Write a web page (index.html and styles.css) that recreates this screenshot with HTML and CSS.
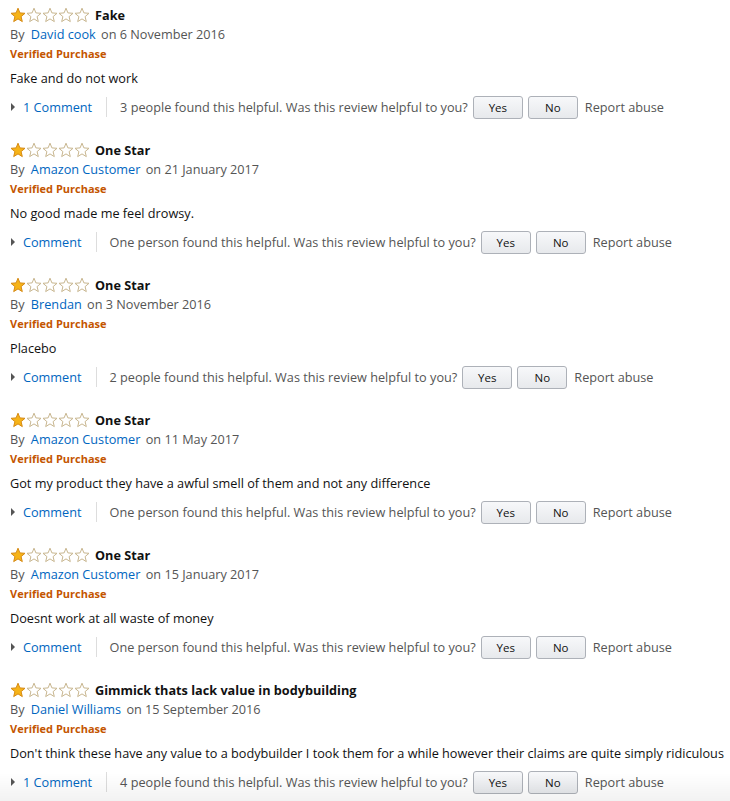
FILE: index.html
```html
<!DOCTYPE html>
<html>
<head>
<meta charset="utf-8">
<link rel="stylesheet" href="styles.css">
</head>
<body>
<svg width="0" height="0" class="defs">
  <defs>
    <path id="star" d="M8 1.2 L9.9 5.9 L15 6.3 L11.1 9.6 L12.3 14.6 L8 11.9 L3.7 14.6 L4.9 9.6 L1 6.3 L6.1 5.9 Z"/>
  </defs>
</svg>
<div class="reviews">

  <div class="review">
    <div class="title-row">
      <span class="stars"><svg viewBox="0 0 16 16" class="star full"><use href="#star"/></svg><svg viewBox="0 0 16 16" class="star"><use href="#star"/></svg><svg viewBox="0 0 16 16" class="star"><use href="#star"/></svg><svg viewBox="0 0 16 16" class="star"><use href="#star"/></svg><svg viewBox="0 0 16 16" class="star"><use href="#star"/></svg></span>
      <span class="title">Fake</span>
    </div>
    <div class="byline">By <a class="author">David cook</a> on 6 November 2016</div>
    <div class="verified">Verified Purchase</div>
    <div class="body">Fake and do not work</div>
    <div class="actions">
      <span class="tri"></span><a class="comment">1 Comment</a><span class="sep"></span>
      <span class="helpful">3 people found this helpful. Was this review helpful to you?</span>
      <button class="btn">Yes</button><button class="btn">No</button>
      <span class="report">Report abuse</span>
    </div>
  </div>

  <div class="review">
    <div class="title-row">
      <span class="stars"><svg viewBox="0 0 16 16" class="star full"><use href="#star"/></svg><svg viewBox="0 0 16 16" class="star"><use href="#star"/></svg><svg viewBox="0 0 16 16" class="star"><use href="#star"/></svg><svg viewBox="0 0 16 16" class="star"><use href="#star"/></svg><svg viewBox="0 0 16 16" class="star"><use href="#star"/></svg></span>
      <span class="title">One Star</span>
    </div>
    <div class="byline">By <a class="author">Amazon Customer</a> on 21 January 2017</div>
    <div class="verified">Verified Purchase</div>
    <div class="body">No good made me feel drowsy.</div>
    <div class="actions">
      <span class="tri"></span><a class="comment">Comment</a><span class="sep"></span>
      <span class="helpful">One person found this helpful. Was this review helpful to you?</span>
      <button class="btn">Yes</button><button class="btn">No</button>
      <span class="report">Report abuse</span>
    </div>
  </div>

  <div class="review">
    <div class="title-row">
      <span class="stars"><svg viewBox="0 0 16 16" class="star full"><use href="#star"/></svg><svg viewBox="0 0 16 16" class="star"><use href="#star"/></svg><svg viewBox="0 0 16 16" class="star"><use href="#star"/></svg><svg viewBox="0 0 16 16" class="star"><use href="#star"/></svg><svg viewBox="0 0 16 16" class="star"><use href="#star"/></svg></span>
      <span class="title">One Star</span>
    </div>
    <div class="byline">By <a class="author">Brendan</a> on 3 November 2016</div>
    <div class="verified">Verified Purchase</div>
    <div class="body">Placebo</div>
    <div class="actions">
      <span class="tri"></span><a class="comment">Comment</a><span class="sep"></span>
      <span class="helpful">2 people found this helpful. Was this review helpful to you?</span>
      <button class="btn">Yes</button><button class="btn">No</button>
      <span class="report">Report abuse</span>
    </div>
  </div>

  <div class="review">
    <div class="title-row">
      <span class="stars"><svg viewBox="0 0 16 16" class="star full"><use href="#star"/></svg><svg viewBox="0 0 16 16" class="star"><use href="#star"/></svg><svg viewBox="0 0 16 16" class="star"><use href="#star"/></svg><svg viewBox="0 0 16 16" class="star"><use href="#star"/></svg><svg viewBox="0 0 16 16" class="star"><use href="#star"/></svg></span>
      <span class="title">One Star</span>
    </div>
    <div class="byline">By <a class="author">Amazon Customer</a> on 11 May 2017</div>
    <div class="verified">Verified Purchase</div>
    <div class="body">Got my product they have a awful smell of them and not any difference</div>
    <div class="actions">
      <span class="tri"></span><a class="comment">Comment</a><span class="sep"></span>
      <span class="helpful">One person found this helpful. Was this review helpful to you?</span>
      <button class="btn">Yes</button><button class="btn">No</button>
      <span class="report">Report abuse</span>
    </div>
  </div>

  <div class="review">
    <div class="title-row">
      <span class="stars"><svg viewBox="0 0 16 16" class="star full"><use href="#star"/></svg><svg viewBox="0 0 16 16" class="star"><use href="#star"/></svg><svg viewBox="0 0 16 16" class="star"><use href="#star"/></svg><svg viewBox="0 0 16 16" class="star"><use href="#star"/></svg><svg viewBox="0 0 16 16" class="star"><use href="#star"/></svg></span>
      <span class="title">One Star</span>
    </div>
    <div class="byline">By <a class="author">Amazon Customer</a> on 15 January 2017</div>
    <div class="verified">Verified Purchase</div>
    <div class="body">Doesnt work at all waste of money</div>
    <div class="actions">
      <span class="tri"></span><a class="comment">Comment</a><span class="sep"></span>
      <span class="helpful">One person found this helpful. Was this review helpful to you?</span>
      <button class="btn">Yes</button><button class="btn">No</button>
      <span class="report">Report abuse</span>
    </div>
  </div>

  <div class="review">
    <div class="title-row">
      <span class="stars"><svg viewBox="0 0 16 16" class="star full"><use href="#star"/></svg><svg viewBox="0 0 16 16" class="star"><use href="#star"/></svg><svg viewBox="0 0 16 16" class="star"><use href="#star"/></svg><svg viewBox="0 0 16 16" class="star"><use href="#star"/></svg><svg viewBox="0 0 16 16" class="star"><use href="#star"/></svg></span>
      <span class="title">Gimmick thats lack value in bodybuilding</span>
    </div>
    <div class="byline">By <a class="author">Daniel Williams</a> on 15 September 2016</div>
    <div class="verified">Verified Purchase</div>
    <div class="body">Don't think these have any value to a bodybuilder I took them for a while however their claims are quite simply ridiculous</div>
    <div class="actions">
      <span class="tri"></span><a class="comment">1 Comment</a><span class="sep"></span>
      <span class="helpful">4 people found this helpful. Was this review helpful to you?</span>
      <button class="btn">Yes</button><button class="btn">No</button>
      <span class="report">Report abuse</span>
    </div>
  </div>

</div>
<div class="fade"></div>
</body>
</html>
```
FILE: styles.css
```css
* { box-sizing: border-box; }
html, body { margin: 0; padding: 0; background: #fff; }
body {
  font-family: "Open Sans", "Liberation Sans", Arial, sans-serif;
  font-size: 12.7px;
  color: #111;
  overflow: hidden;
}
.defs { position: absolute; }
.reviews { padding-left: 10px; }
.review {
  height: 135px;
  padding-top: 5px;
}
.title-row {
  display: flex;
  align-items: center;
  height: 20px;
}
.stars { display: flex; width: 85px; }
.star {
  width: 16px;
  height: 16px;
  fill: #fff;
  stroke: #c8b68f;
  stroke-width: 1;
}
.star.full { fill: #f6b318; stroke: #d68a14; }
.title { font-weight: bold; font-size: 12.7px; color: #111; }
.byline { line-height: 19px; color: #555; }
.author { color: #0066c0; margin: 0 2px 0 3px; }
.verified {
  line-height: 19px;
  color: #c45500;
  font-weight: bold;
  font-size: 11px;
}
.body { margin-top: 6px; line-height: 19px; color: #111; }
.actions {
  margin-top: 7px;
  height: 24px;
  display: flex;
  align-items: center;
  color: #555;
}
.tri {
  width: 0; height: 0;
  border-left: 4px solid #555;
  border-top: 4px solid transparent;
  border-bottom: 4px solid transparent;
  margin: 0 8px 0 1px;
}
.comment { color: #0066c0; }
.sep {
  width: 1px;
  height: 20px;
  background: #ddd;
  margin: 0 13px 0 14px;
}
.btn {
  width: 50px;
  height: 23px;
  margin-left: 5px;
  border: 1px solid #adb1b8;
  border-radius: 3px;
  background: linear-gradient(#f7f8fa, #e7e9ec);
  font-family: inherit;
  font-size: 11.5px;
  color: #111;
  padding: 0;
}
.report { margin-left: 7px; }
.fade {
  position: fixed;
  left: 0; right: 0; bottom: 0;
  height: 28px;
  background: linear-gradient(rgba(0,0,0,0), rgba(0,0,0,0.05));
  pointer-events: none;
}
```
